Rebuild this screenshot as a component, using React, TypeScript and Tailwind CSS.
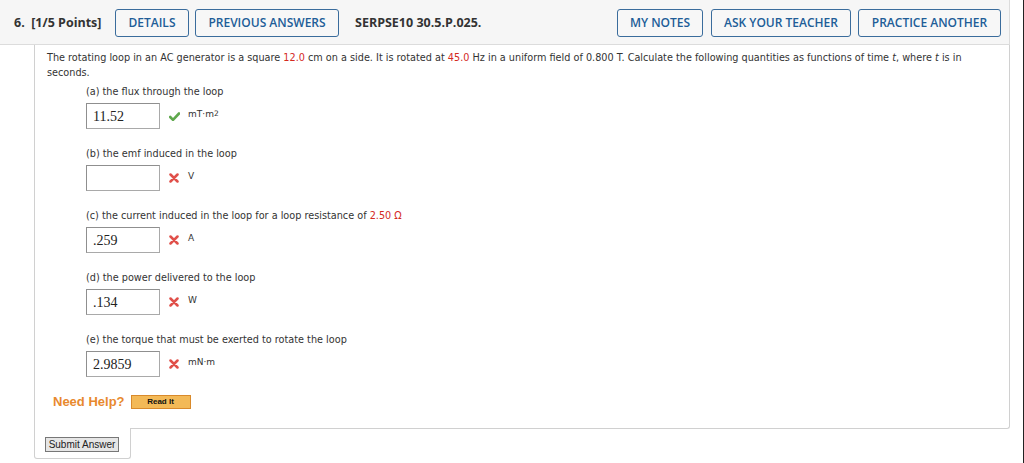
import React from "react";

const body = { fontFamily: '"DejaVu Sans", Verdana, sans-serif' };

function Check() {
  return (
    <svg width="11" height="9" viewBox="0 0 11 9" className="block">
      <path d="M1.2 5 L4 7.8 L10 1.5" fill="none" stroke="#5fa84d" strokeWidth="2.6" strokeLinecap="round" strokeLinejoin="round" />
    </svg>
  );
}

function Cross() {
  return (
    <svg width="10" height="10" viewBox="0 0 10 10" className="block">
      <path d="M1.5 1.5 L8.5 8.5 M8.5 1.5 L1.5 8.5" fill="none" stroke="#e0504a" strokeWidth="2.5" strokeLinecap="round" />
    </svg>
  );
}

type Item = { label: React.ReactNode; value: string; ok: boolean; unit: React.ReactNode };

const items: Item[] = [
  { label: "(a) the flux through the loop", value: "11.52", ok: true, unit: <span>mT·m<sup className="text-[7.5px] relative -top-[1px]">2</sup></span> },
  { label: "(b) the emf induced in the loop", value: "", ok: false, unit: "V" },
  {
    label: (
      <span>
        (c) the current induced in the loop for a loop resistance of <span className="text-[#d42a1f]">2.50 Ω</span>
      </span>
    ),
    value: ".259",
    ok: false,
    unit: "A",
  },
  { label: "(d) the power delivered to the loop", value: ".134", ok: false, unit: "W" },
  { label: "(e) the torque that must be exerted to rotate the loop", value: "2.9859", ok: false, unit: "mN·m" },
];

function HeaderButton({ children, w }: { children: React.ReactNode; w: string }) {
  return (
    <div
      className={`${w} h-[28px] flex items-center justify-center border border-[#3a6c9c] rounded-[3px] text-[#215d97] text-[12px] font-semibold bg-[#f7f7f7]`}
      style={{ fontFamily: '"Open Sans", sans-serif' }}
    >
      {children}
    </div>
  );
}

export default function App() {
  return (
    <div className="w-[1024px] h-[463px] bg-white overflow-hidden flex">
      <div className="w-[1010px] flex flex-col">
        <div
          className="h-[45px] shrink-0 bg-[#f6f6f6] border-b border-r border-[#dcdcdc] flex items-center pt-[2px] pl-[14px] pr-[8px]"
          style={{ fontFamily: '"Open Sans", sans-serif' }}
        >
          <div className="text-[12.5px] font-bold text-[#333] w-[101px]">6.&nbsp; [1/5 Points]</div>
          <HeaderButton w="w-[74px]">DETAILS</HeaderButton>
          <div className="w-[6px]" />
          <HeaderButton w="w-[144px]">PREVIOUS ANSWERS</HeaderButton>
          <div className="ml-[16px] text-[12.5px] font-bold text-[#333]">SERPSE10 30.5.P.025.</div>
          <div className="flex-1" />
          <HeaderButton w="w-[86px]">MY NOTES</HeaderButton>
          <div className="w-[8px]" />
          <HeaderButton w="w-[140px]">ASK YOUR TEACHER</HeaderButton>
          <div className="w-[7px]" />
          <HeaderButton w="w-[143px]">PRACTICE ANOTHER</HeaderButton>
        </div>

        <div className="ml-[34px] flex flex-col">
          <div className="border-l border-r border-b border-[#d0d0d0] rounded-br-[3px] pl-[12px] pt-[5px] pb-[19px] text-[#333]" style={body}>
            <p className="text-[9.7px] leading-[15px] pr-[30px]">
              The rotating loop in an AC generator is a square <span className="text-[#d42a1f]">12.0</span> cm on a side. It is rotated at{" "}
              <span className="text-[#d42a1f]">45.0</span> Hz in a uniform field of 0.800 T. Calculate the following quantities as functions of time{" "}
              <i>t</i>, where <i>t</i> is in seconds.
            </p>
            <div className="pl-[39px] mt-[5px]">
              {items.map((it, i) => (
                <div key={i} className="mb-[18px]">
                  <div className="text-[9.7px] leading-[14px] h-[14px] whitespace-nowrap">{it.label}</div>
                  <div className="mt-[4px] h-[26px] flex items-center">
                    <div
                      className="w-[74px] h-[26px] border border-[#a9a9a9] border-t-[#8f8f8f] border-l-[#8f8f8f] bg-white flex items-center pl-[6px] text-[14px] text-[#222]"
                      style={{ fontFamily: '"Liberation Serif", serif' }}
                    >
                      {it.value}
                    </div>
                    <div className="ml-[7px] w-[14px] flex justify-center">{it.ok ? <Check /> : <Cross />}</div>
                    <div className={`${it.ok ? "ml-[7px] -mt-[3px]" : "ml-[7px] -mt-[2px]"} text-[9px] text-[#333]`}>{it.unit}</div>
                  </div>
                </div>
              ))}
            </div>
            <div className="flex items-center h-[14px] pl-[6px]">
              <span className="text-[13px] font-bold text-[#e8892e]" style={{ fontFamily: '"Liberation Sans", Arial, sans-serif' }}>
                Need Help?
              </span>
              <div
                className="ml-[6px] w-[60px] h-[14px] bg-[#f3b957] border border-[#d98a2b] flex items-center justify-center text-[8px] font-bold text-[#111]"
                style={{ fontFamily: '"Liberation Sans", Arial, sans-serif' }}
              >
                Read It
              </div>
            </div>
          </div>
          <div className="-mt-px w-[97px] h-[31px] bg-white border-l border-r border-b border-[#d0d0d0] rounded-b-[3px] pl-[10px] pt-[9px]">
            <div
              className="w-[74px] h-[15px] bg-[#e6e6e6] border border-[#777] flex items-center justify-center text-[10px] text-[#222]"
              style={{ fontFamily: '"Liberation Sans", Arial, sans-serif' }}
            >
              Submit Answer
            </div>
          </div>
        </div>
      </div>
      <div className="flex-1" />
      <div className="w-px bg-[#222]" />
    </div>
  );
}
